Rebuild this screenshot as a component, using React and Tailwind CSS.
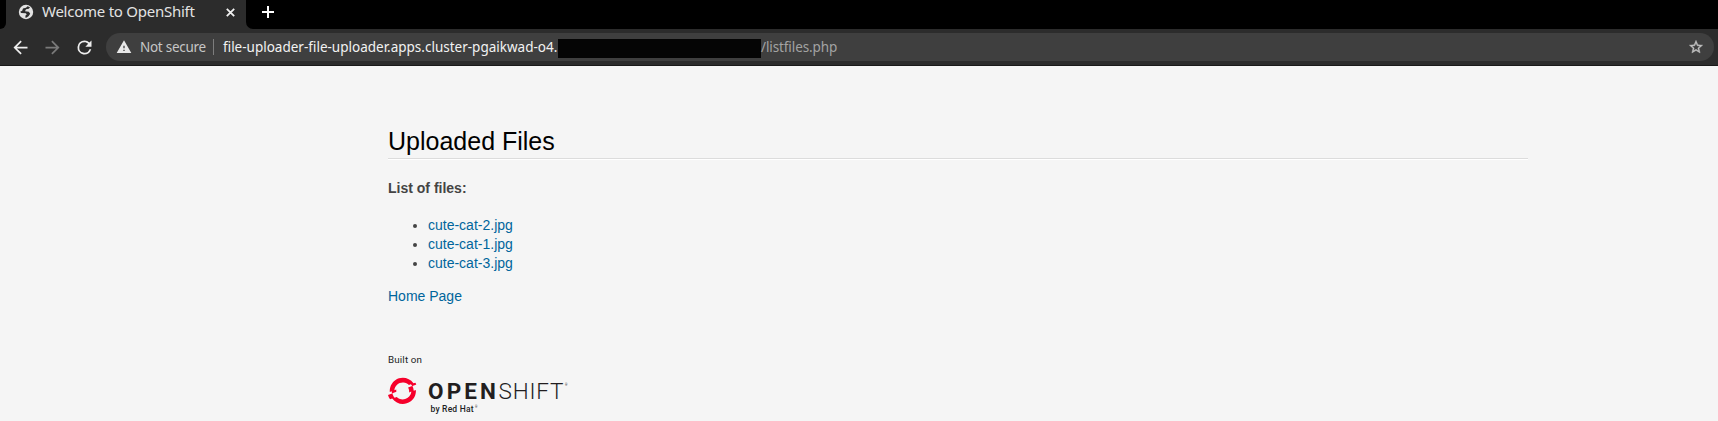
import React from "react";
import { SiRedhatopenshift } from "react-icons/si";

const files = ["cute-cat-2.jpg", "cute-cat-1.jpg", "cute-cat-3.jpg"];

function Globe() {
  return (
    <svg className="size-[18px] shrink-0" viewBox="0 0 18 18">
      <circle cx="9" cy="9" r="7.200" fill="#e2e2e2" />
      <path d="M10.500 3.200 13 4.300 11.800 5.800 9 6.200 8 8.200 11.800 8.800 13.200 10.800 11.500 13.200 9.200 14.700 8.300 14.500 8.600 12.200 9.800 11.400 8.800 10.300 4.200 10 3.200 8.700 5.200 7.800 6 5.600 9 4.800z" fill="#2c2c2c" />
    </svg>
  );
}

function TabStrip() {
  return (
    <div className="flex h-[29px] bg-black">
      <div className="flex w-[6px] items-end bg-[#2c2c2c]">
        <div className="h-full w-full rounded-br-[6px] bg-black" />
      </div>
      <div className="flex h-[29px] w-[240px] items-start bg-[#2c2c2c] pl-[11px] pt-[3px] text-[#e3e3e3]">
        <Globe />
        <span className="-mt-px ml-[7px] w-[176px] whitespace-nowrap text-[15px] leading-[18px] tracking-[-0.250px]">
          Welcome to OpenShift
        </span>
        <svg className="ml-[8px] mt-[5px] size-[9px]" viewBox="0 0 9 9" stroke="#f0f0f0" strokeWidth="1.8">
          <path d="M.8.8l7.400 7.400M8.200.8.8 8.200" />
        </svg>
      </div>
      <div className="flex-1 bg-[#2c2c2c]">
        <div className="h-full rounded-bl-[7px] bg-black pl-[16px] pt-[6px]">
          <svg className="size-[12px]" viewBox="0 0 12 12" stroke="#fff" strokeWidth="2">
            <path d="M6 0v12M0 6h12" />
          </svg>
        </div>
      </div>
    </div>
  );
}

function Toolbar() {
  return (
    <div className="flex h-[37px] items-start border-b border-[#191919] bg-[#2c2c2c] pt-[4px]">
      <div className="flex h-[28px] w-[106px] items-center pl-[9.500px]">
        <svg className="size-[21px]" viewBox="0 0 24 24" fill="#eeeeee">
          <path d="M20 11H7.830l5.590-5.590L12 4l-8 8 8 8 1.410-1.410L7.830 13H20v-2z" />
        </svg>
        <svg className="ml-[11px] size-[21px]" viewBox="0 0 24 24" fill="#7a7a7a">
          <path d="M12 4l-1.410 1.410L16.170 11H4v2h12.170l-5.580 5.590L12 20l8-8z" />
        </svg>
        <svg className="ml-[11px] size-[21px]" viewBox="0 0 24 24" fill="#eeeeee">
          <path d="M17.650 6.350A7.960 7.960 0 0 0 12 4a8 8 0 1 0 7.730 10h-2.080A6 6 0 1 1 12 6c1.660 0 3.140.690 4.220 1.780L13 11h7V4l-2.350 2.350z" />
        </svg>
      </div>
      <div className="mr-[4px] flex h-[28px] flex-1 items-center rounded-full bg-[#3f3f3f] pl-[10px] text-[13.500px] leading-[28px]">
        <svg className="size-[16px]" viewBox="0 0 24 24" fill="#e8e8e8">
          <path d="M1 21h22L12 2 1 21zm12-3h-2v-2h2v2zm0-4h-2v-4h2v4z" />
        </svg>
        <span className="ml-[8px] w-[73px] whitespace-nowrap tracking-[-0.280px] text-[#c6c6c6]">Not secure</span>
        <div className="h-[16px] w-px bg-[#7d7d7d]" />
        <span className="ml-[9px] w-[335px] whitespace-nowrap text-[#f2f2f2]">
          file-uploader-file-uploader.apps.cluster-pgaikwad-o4.
        </span>
        <div className="mt-[2px] h-[19px] w-[203px] bg-[#050505]" />
        <span className="tracking-[-0.100px] text-[#a3a3a3]">/listfiles.php</span>
        <svg className="ml-auto mr-[10px] size-[16px]" viewBox="0 0 24 24" fill="#c2c2c2" stroke="#c2c2c2" strokeWidth=".6">
          <path d="M22 9.240l-7.190-.620L12 2 9.190 8.630 2 9.240l5.460 4.730L5.820 21 12 17.270 18.180 21l-1.630-7.030L22 9.240zM12 15.400l-3.760 2.270 1-4.280-3.320-2.880 4.380-.380L12 6.100l1.710 4.040 4.380.380-3.320 2.880 1 4.280L12 15.400z" />
        </svg>
      </div>
    </div>
  );
}

function OpenShiftLogo() {
  return (
    <svg className="mt-[47px] block h-[66px] w-[190px]" viewBox="0 0 190 66" fontFamily='Roboto, sans-serif' fill="#221e1f">
      <text x="0" y="10.300" fontSize="9.800" textLength="34">Built on</text>
      <SiRedhatopenshift x="0" y="23.700" size={28.5} color="#f6002b" />
      <text x="40" y="45.700" fontSize="22.500" fontWeight="700" textLength="68">OPEN</text>
      <text x="110.500" y="45.700" fontSize="22.500" fontWeight="300" textLength="65">SHIFT</text>
      <text x="177" y="33" fontSize="3">®</text>
      <text x="42.500" y="59" fontSize="8.500" fontWeight="500" textLength="43">by Red Hat</text>
      <text x="87" y="55" fontSize="3">®</text>
    </svg>
  );
}

export default function App() {
  return (
    <div className="h-[421px] overflow-hidden bg-[#f5f5f5]">
      <header className='font-["Noto_Sans",sans-serif]'>
        <TabStrip />
        <Toolbar />
      </header>
      <main className='ml-[388px] w-[1140px] pt-[58px] font-["Liberation_Sans",sans-serif] text-[14px] leading-[19px] text-[#444]'>
        <h1 className="h-[35px] border-b border-[#dcdcdc] text-[25px] leading-[34px] text-black shadow-[0_1px_0_#fff]">
          Uploaded Files
        </h1>
        <p className="mt-[20px] font-bold">List of files:</p>
        <ul className="mt-[18px] list-disc pl-[40px]">
          {files.map((file) => (
            <li key={file}>
              <a href="#" className="text-[#00659c]">{file}</a>
            </li>
          ))}
        </ul>
        <p className="mt-[14px]">
          <a href="#" className="text-[#00659c]">Home Page</a>
        </p>
        <OpenShiftLogo />
      </main>
    </div>
  );
}
